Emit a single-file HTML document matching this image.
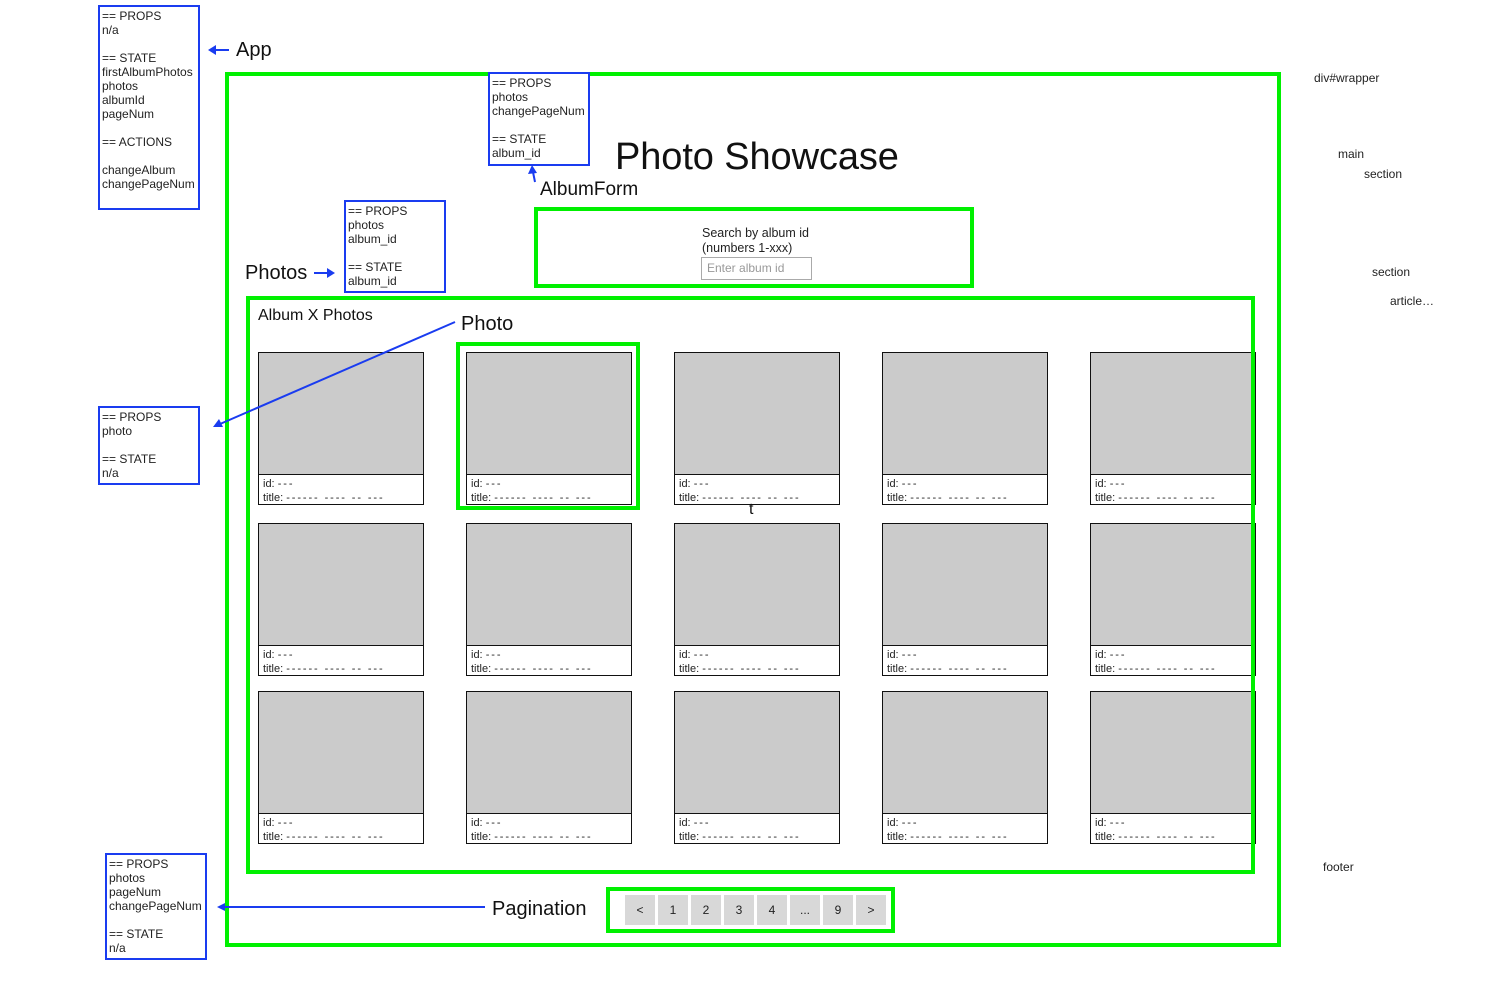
<!DOCTYPE html>
<html><head><meta charset="utf-8"><style>
*{margin:0;padding:0;box-sizing:border-box}
body{width:1512px;height:982px;background:#fff;position:relative;overflow:hidden;font-family:"Liberation Sans",Arial,sans-serif;color:#111}
.a{position:absolute}
.g{position:absolute;border:4px solid #00f000;z-index:5}
.b{position:absolute;border:2px solid #1a3cf0;font-size:12px;line-height:14px;padding:2px 0 0 2px;color:#222;background:#fff;z-index:6}
.card{position:absolute;width:166px;height:153px;border:1px solid #111;background:#fff}
.card .img{height:122px;background:#cbcbcb;border-bottom:1px solid #111}
.card .cap{font-size:11px;line-height:14px;padding:2px 0 0 4px;color:#222}
.d{letter-spacing:1.9px}
.pg{position:absolute;top:895px;width:30px;height:30px;background:#d8d8d8;font-size:12px;line-height:30px;text-align:center;color:#222}
.lbl{position:absolute;font-size:12px;color:#222}
</style></head><body>

<div class="g" style="left:225px;top:72px;width:1056px;height:875px"></div>
<div class="g" style="left:534px;top:207px;width:440px;height:81px"></div>
<div class="g" style="left:246px;top:296px;width:1009px;height:578px"></div>
<div class="g" style="left:456px;top:342px;width:184px;height:168px"></div>
<div class="g" style="left:606px;top:887px;width:289px;height:46px"></div>

<div class="a" style="left:615px;top:135px;font-size:38px;line-height:44px;color:#111;letter-spacing:-0.1px">Photo Showcase</div>

<div class="a" style="left:702px;top:226px;font-size:12.5px;line-height:15px;color:#222">Search by album id<br>(numbers 1-xxx)</div>
<div class="a" style="left:701px;top:257px;width:111px;height:23px;border:1px solid #aaa;font-size:12px;line-height:21px;padding-left:5px;color:#999">Enter album id</div>

<div class="a" style="left:258px;top:307px;font-size:16px;color:#111">Album X Photos</div>
<div class="a" style="left:461px;top:313px;font-size:20px;color:#111">Photo</div>
<div class="a" style="left:245px;top:262px;font-size:20px;color:#111">Photos</div>
<div class="a" style="left:236px;top:39px;font-size:20px;color:#111">App</div>
<div class="a" style="left:540px;top:179px;font-size:19px;color:#111">AlbumForm</div>
<div class="a" style="left:492px;top:898px;font-size:20px;color:#111">Pagination</div>
<div class="a" style="left:749px;top:501px;font-size:16px;z-index:7">t</div>

<div id="cards"></div>

<div class="pg" style="left:625px">&lt;</div>
<div class="pg" style="left:658px">1</div>
<div class="pg" style="left:691px">2</div>
<div class="pg" style="left:724px">3</div>
<div class="pg" style="left:757px">4</div>
<div class="pg" style="left:790px">...</div>
<div class="pg" style="left:823px">9</div>
<div class="pg" style="left:856px">&gt;</div>

<div class="b" style="left:98px;top:5px;width:102px;height:205px">== PROPS<br>n/a<br><br>== STATE<br>firstAlbumPhotos<br>photos<br>albumId<br>pageNum<br><br>== ACTIONS<br><br>changeAlbum<br>changePageNum</div>
<div class="b" style="left:488px;top:72px;width:102px;height:94px">== PROPS<br>photos<br>changePageNum<br><br>== STATE<br>album_id</div>
<div class="b" style="left:344px;top:200px;width:102px;height:93px">== PROPS<br>photos<br>album_id<br><br>== STATE<br>album_id</div>
<div class="b" style="left:98px;top:406px;width:102px;height:79px">== PROPS<br>photo<br><br>== STATE<br>n/a</div>
<div class="b" style="left:105px;top:853px;width:102px;height:107px">== PROPS<br>photos<br>pageNum<br>changePageNum<br><br>== STATE<br>n/a</div>

<div class="lbl" style="left:1314px;top:71px">div#wrapper</div>
<div class="lbl" style="left:1338px;top:147px">main</div>
<div class="lbl" style="left:1364px;top:167px">section</div>
<div class="lbl" style="left:1372px;top:265px">section</div>
<div class="lbl" style="left:1390px;top:294px">article…</div>
<div class="lbl" style="left:1323px;top:860px">footer</div>

<svg class="a" style="left:0;top:0;z-index:8" width="1512" height="982">
<g stroke="#1a3cf0" stroke-width="2" fill="#1a3cf0">
<line x1="214" y1="50" x2="229" y2="50"/><polygon points="208,50 216,45 216,55" stroke="none"/>
<line x1="314" y1="273" x2="328" y2="273"/><polygon points="335,273 327,268 327,278" stroke="none"/>
<line x1="535" y1="182" x2="533" y2="172"/><polygon points="532,165 528,174 537,173" stroke="none"/>
<line x1="455" y1="322" x2="220" y2="424"/><polygon points="213,427 219,419 223,427" stroke="none"/>
<line x1="485" y1="907" x2="224" y2="907"/><polygon points="217,907 225,903 225,911" stroke="none"/>
</g></svg>

<script>
var xs=[258,466,674,882,1090],ys=[352,523,691],h='';
ys.forEach(function(y){xs.forEach(function(x){h+='<div class="card" style="left:'+x+'px;top:'+y+'px"><div class="img"></div><div class="cap">id: <span class="d">---</span><br>title: <span class="d">------ ---- -- ---</span></div></div>';});});
document.getElementById('cards').innerHTML=h;
</script>
</body></html>
